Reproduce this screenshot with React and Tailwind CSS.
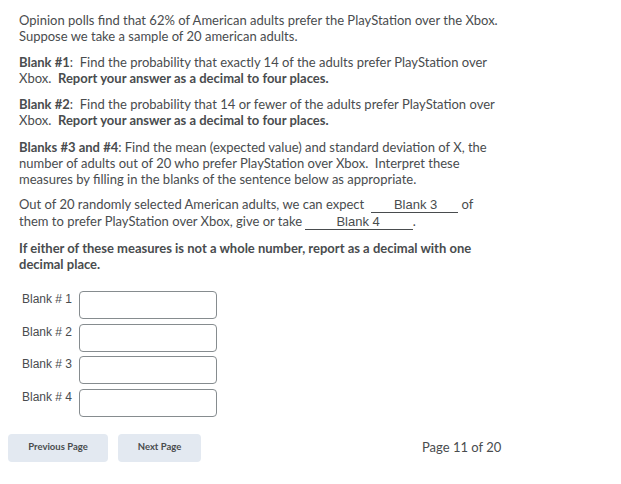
export default function App() {
  const lato = { fontFamily: "Lato, 'Open Sans', sans-serif" };
  const arial = { fontFamily: "'Liberation Sans', Arial, sans-serif" };
  return (
    <div className="w-[621px] h-[484px] bg-white text-[#494c4e] overflow-hidden" style={lato}>
      <div className="pl-[19px] pt-[12px] text-[13px] leading-[16px] whitespace-nowrap">
        <p>
          Opinion polls find that 62% of American adults prefer the PlayStation over the Xbox.<br />
          Suppose we take a sample of 20 american adults.
        </p>
        <p className="mt-[10px]">
          <b>Blank #1</b>:&nbsp; Find the probability that exactly 14 of the adults prefer PlayStation over<br />
          Xbox.&nbsp; <b>Report your answer as a decimal to four places.</b>
        </p>
        <p className="mt-[10px]">
          <b>Blank #2</b>:&nbsp; Find the probability that 14 or fewer of the adults prefer PlayStation over<br />
          Xbox.&nbsp; <b>Report your answer as a decimal to four places.</b>
        </p>
        <p className="mt-[11px]">
          <b>Blanks #3 and #4</b>: Find the mean (expected value) and standard deviation of X, the<br />
          number of adults out of 20 who prefer PlayStation over Xbox.&nbsp; Interpret these<br />
          measures by filling in the blanks of the sentence below as appropriate.
        </p>
        <p className="mt-[9px]">
          Out of 20 randomly selected American adults, we can expect&nbsp;{" "}
          <span
            className="inline-block border-b border-[#494c4e] pl-[23px] pr-[21px] leading-[14px] text-[13px]"
            style={arial}
          >
            Blank 3
          </span>{" "}
          of<br />
          them to prefer PlayStation over Xbox, give or take{" "}
          <span
            className="inline-block border-b border-[#494c4e] pl-[31px] pr-[33px] leading-[14px] text-[13px]"
            style={arial}
          >
            Blank 4
          </span>
          .
        </p>
        <p className="mt-[10px] font-bold">
          If either of these measures is not a whole number, report as a decimal with one<br />
          decimal place.
        </p>
      </div>

      <div className="mt-[19px] ml-[22px] flex flex-col gap-[4.5px] text-[12px] text-[#494c4e]" style={arial}>
        {[1, 2, 3, 4].map((n) => (
          <div key={n} className="flex items-start">
            <span className="w-[57px] pt-[1px] leading-[14px]">Blank # {n}</span>
            <div className="w-[138px] h-[28px] border border-[#868c8f] rounded-[4px] bg-white" />
          </div>
        ))}
      </div>

      <div className="mt-[17px] ml-[8px] flex items-center">
        <button className="w-[100px] h-[28px] rounded-[4px] bg-[#e3e9f1] text-[9.5px] font-bold text-[#494c4e]">
          Previous Page
        </button>
        <button className="ml-[10px] w-[83px] h-[28px] rounded-[4px] bg-[#e3e9f1] text-[9.5px] font-bold text-[#494c4e]">
          Next Page
        </button>
        <span className="ml-[221px] text-[13px]">Page 11 of 20</span>
      </div>
    </div>
  );
}
